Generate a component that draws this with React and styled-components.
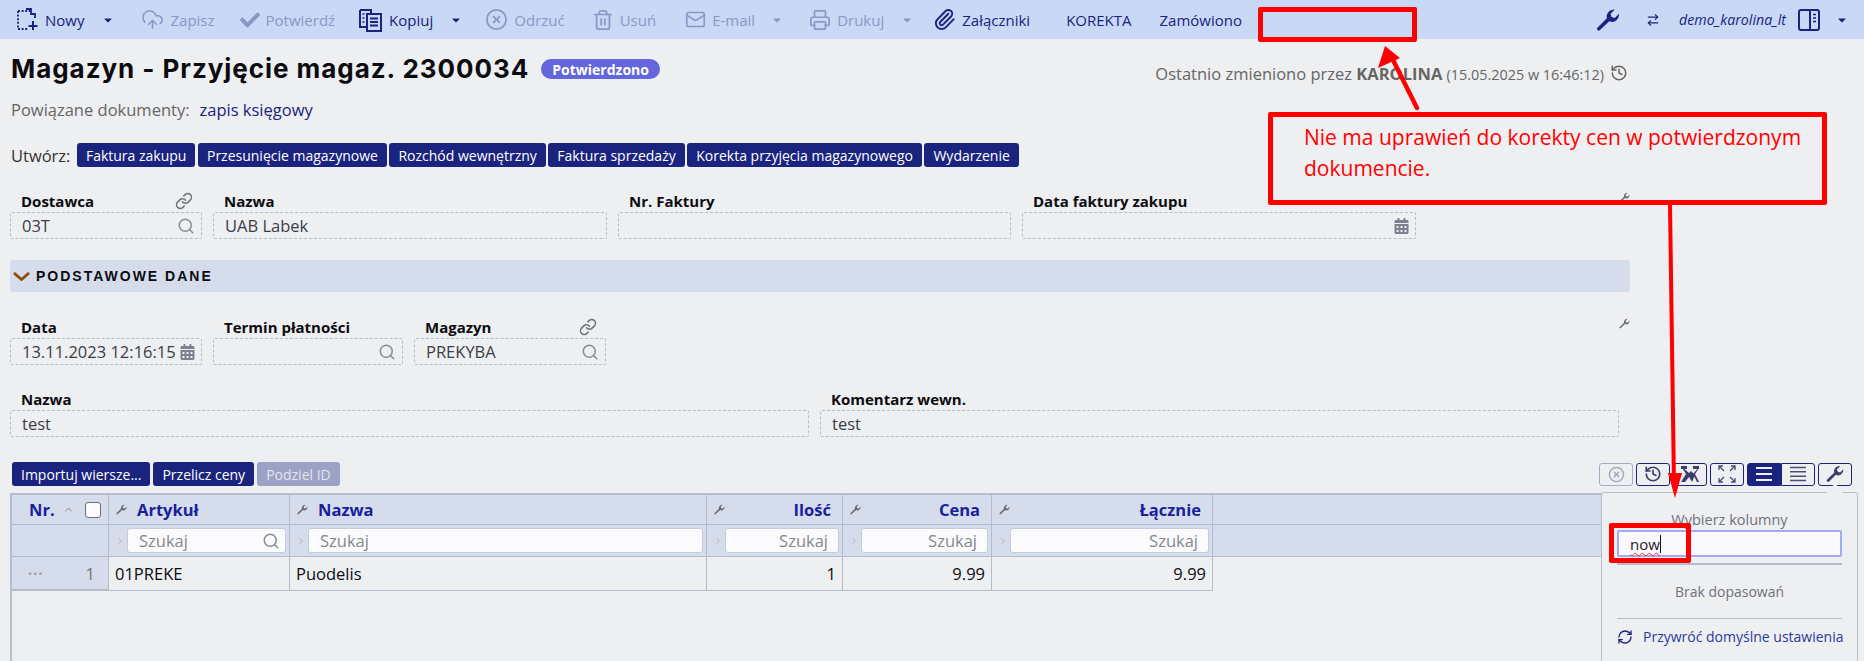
import React from "react";
import styled, { createGlobalStyle } from "styled-components";
import { CloudUpload, CircleX, Trash2, Mail, Printer, Paperclip, Search, Link as LinkIcon, History, RefreshCw, ChevronRight, ChevronUp, ArrowRightLeft } from "lucide-react";
import { FaCheck, FaCalendarAlt, FaCaretDown } from "react-icons/fa";

const NAVY = "#1a237e";
const MUTED = "#8c97c6";
const FONT = `"Open Sans", "Noto Sans", sans-serif`;

const Global = createGlobalStyle`
  html, body { margin: 0; padding: 0; background: #eeeff1; }
  * { box-sizing: border-box; }
  body { font-family: ${FONT}; }
`;

const Page = styled.div`
  position: relative;
  width: 1864px;
  height: 661px;
  overflow: hidden;
  background: #eeeff1;
  color: #333;
`;

const Toolbar = styled.div`
  display: flex;
  align-items: center;
  height: 39px;
  background: #c9d8f5;
  font-size: 15px;
`;

const ToolItem = styled.div`
  display: flex;
  align-items: center;
  gap: ${(p) => p.$gap ?? 6}px;
  margin-left: ${(p) => p.$ml ?? 0}px;
  color: ${(p) => (p.$off ? MUTED : NAVY)};
  white-space: nowrap;
`;

const Caret = styled(FaCaretDown)`
  font-size: 12px;
  margin-left: ${(p) => p.$ml ?? 0}px;
  margin-right: ${(p) => p.$mr ?? 0}px;
  color: ${(p) => (p.$off ? MUTED : NAVY)};
`;

const ToolSpacer = styled.div`
  flex: 1;
`;

const SwapGlyph = styled(ArrowRightLeft)`
  width: 14px;
  height: 14px;
  margin-left: 26px;
  color: ${NAVY};
`;

const UserName = styled.span`
  font-style: italic;
  font-size: 14.2px;
  color: ${NAVY};
  margin-left: 19px;
`;

const Content = styled.div`
  padding-left: 10px;
`;

const TitleRow = styled.div`
  display: flex;
  align-items: center;
  justify-content: space-between;
  width: 1620px;
  height: 24px;
  margin-top: 18px;
`;

const TitleGroup = styled.div`
  display: flex;
  align-items: center;
  gap: 12px;
`;

const Title = styled.h1`
  margin: 0 0 0 1px;
  font-family: Inter, sans-serif;
  font-size: 26px;
  font-weight: 700;
  letter-spacing: 0.95px;
  line-height: 24px;
  color: #0c0c10;
  white-space: nowrap;
`;

const Badge = styled.span`
  display: inline-flex;
  align-items: center;
  height: 20px;
  padding: 0 11px;
  border-radius: 10px;
  background: #6366dc;
  color: #fff;
  font-size: 14px;
  font-weight: 700;
`;

const Changed = styled.div`
  display: flex;
  align-items: center;
  gap: 6px;
  margin-right: 2px;
  margin-top: 8px;
  color: #666;
  font-size: 16.5px;
  white-space: nowrap;
  b { font-weight: 700; }
  small { font-size: 14.4px; }
`;

const Related = styled.div`
  margin: 18px 0 0 1px;
  height: 22px;
  line-height: 22px;
  font-size: 16.5px;
  color: #666;
  a { color: ${NAVY}; margin-left: 10px; text-decoration: none; }
`;

const CreateRow = styled.div`
  display: flex;
  align-items: center;
  gap: 2.5px;
  margin: 22px 0 0 1px;
  height: 24px;
`;

const CreateLabel = styled.span`
  font-size: 16.5px;
  color: #333;
  margin-right: 4px;
`;

const Btn = styled.button`
  height: 24px;
  padding: 0 9px;
  border: 0;
  border-radius: 3px;
  background: ${(p) => (p.disabled ? "#9ca1c6" : NAVY)};
  color: ${(p) => (p.disabled ? "#e3e5ef" : "#fff")};
  font-family: ${FONT};
  font-size: 14px;
  white-space: nowrap;
`;

const FieldRow = styled.div`
  display: flex;
  gap: 11px;
  width: 1620px;
  margin-top: ${(p) => p.$mt}px;
`;

const Field = styled.div`
  width: ${(p) => p.$w}px;
  flex: none;
`;

const LabelLine = styled.div`
  display: flex;
  align-items: center;
  justify-content: space-between;
  height: 22px;
  padding: 0 9px 0 11px;
  font-size: 15px;
  font-weight: 700;
  color: #0c0c10;
  white-space: nowrap;
`;

const LinkGlyph = styled(LinkIcon)`
  width: 18px;
  height: 18px;
  color: #70727f;
`;

const Input = styled.div`
  display: flex;
  align-items: center;
  justify-content: space-between;
  height: 27px;
  padding: 0 6px 0 11px;
  border: 1px dashed #b6bccd;
  border-radius: 2px;
  font-size: 16.5px;
  color: #3b3d48;
  white-space: nowrap;
`;

const SearchGlyph = styled(Search)`
  width: 18px;
  height: 18px;
  color: #8a8c96;
  flex: none;
`;

const CalGlyph = styled(FaCalendarAlt)`
  width: 15px;
  height: 16px;
  color: #7f8190;
  flex: none;
`;

const WrenchIcon = ({ className, size = 24, color = "currentColor" }) => (
  <svg className={className} width={size} height={size} viewBox="0 0 25 24" fill={color}>
    <path d="M1 20.5 L11.3 10.2 C10.3 5.5 13.8 1 19 1 L19.6 1.1 L15.2 5.5 L16.2 8.9 L19.6 9.9 L23.9 5.5 C24.4 11.5 19 16 13.8 13.2 L3.6 23 C2.6 23.8 0.4 21.6 1 20.5 Z" />
  </svg>
);

const RowWrench = styled(WrenchIcon)`
  margin: 2px 0 0 auto;
  color: #70727f;
  flex: none;
`;

const SectionBar = styled.div`
  display: flex;
  align-items: center;
  gap: 6px;
  width: 1620px;
  height: 32px;
  margin-top: 21px;
  padding-left: 3px;
  border-radius: 2px;
  background: #d5dcec;
  font-family: "Liberation Sans", Arial, sans-serif;
  font-size: 14px;
  font-weight: 700;
  letter-spacing: 2px;
  color: #0c0c10;
`;

const SectionChevron = () => (
  <svg width="17" height="9" viewBox="0 0 17 9" fill="none" stroke="#8a4b08" strokeWidth="2.8">
    <path d="M1 1l7.5 6.5L16 1" />
  </svg>
);

const TableBar = styled.div`
  display: flex;
  align-items: center;
  justify-content: space-between;
  width: 1842px;
  height: 24px;
  margin-top: 25px;
  padding-left: 2px;
`;

const BtnGroup = styled.div`
  display: flex;
  gap: 3px;
`;

const ViewGroup = styled.div`
  display: flex;
  gap: 3px;
`;

const ViewBtn = styled.div`
  display: flex;
  align-items: center;
  justify-content: center;
  width: ${(p) => p.$w ?? 34}px;
  height: 23px;
  border: 1px solid ${(p) => (p.$off ? "#a6abc8" : NAVY)};
  border-radius: ${(p) => p.$radius ?? "3px"};
  background: ${(p) => (p.$on ? NAVY : "transparent")};
  color: ${(p) => (p.$on ? "#eef" : p.$off ? "#a6a9b8" : "#3a3f6e")};
`;

const Segment = styled.div`
  display: flex;
`;

const Table = styled.div`
  width: 1620px;
  height: 200px;
  margin-top: 7px;
  border-left: 2px solid #b5bccc;
  border-top: 2px solid #b5bccc;
`;

const COLS = "97px 181px 417px 136px 149px 221px";

const HeadRow = styled.div`
  display: grid;
  grid-template-columns: ${COLS} 1fr;
  height: ${(p) => p.$h}px;
  background: #d5dcec;
  border-bottom: 1px solid #b5bccc;
`;

const HeadCell = styled.div`
  display: flex;
  align-items: center;
  justify-content: ${(p) => (p.$right ? "space-between" : "flex-start")};
  gap: 10px;
  padding: 0 11px 0 7px;
  border-right: 1px solid #b5bccc;
  color: #1a1f9c;
  font-size: 16.5px;
  font-weight: 700;
`;

const NrCell = styled(HeadCell)`
  padding: 0 0 0 17px;
  gap: 0;
`;

const SortCaret = styled(ChevronUp)`
  width: 11px;
  height: 11px;
  margin-left: 8px;
  color: #777;
`;

const Check = styled.span`
  width: 16px;
  height: 16px;
  margin-left: 11px;
  border: 1.5px solid #6d6d75;
  border-radius: 3px;
  background: #fbfbfe;
`;

const HeadWrench = styled(WrenchIcon)`
  color: #666a78;
  flex: none;
`;

const FilterCell = styled.div`
  display: flex;
  align-items: center;
  gap: 2px;
  padding: 0 3px 0 6px;
  border-right: 1px solid #b5bccc;
`;

const FilterChevron = styled(ChevronRight)`
  width: 10px;
  height: 16px;
  color: #a8acb8;
  flex: none;
`;

const FilterBox = styled.div`
  flex: 1;
  display: flex;
  align-items: center;
  justify-content: ${(p) => (p.$right ? "flex-end" : "space-between")};
  height: 25px;
  padding: 0 ${(p) => (p.$right ? 10 : 5)}px 0 11px;
  border: 1px solid #c8ccd6;
  border-radius: 3px;
  background: #fbfbfe;
  color: #85878f;
  font-size: 16.5px;
`;

const DataRow = styled.div`
  display: grid;
  grid-template-columns: ${COLS};
  height: 32px;
  width: 1201px;
`;

const DataCell = styled.div`
  display: flex;
  align-items: center;
  justify-content: ${(p) => (p.$right ? "flex-end" : "flex-start")};
  padding: 0 6px;
  border-right: 1px solid #b5bccc;
  border-bottom: 1px solid #b5bccc;
  color: #0c0c10;
  font-size: 16.5px;
`;

const RowHead = styled(DataCell)`
  justify-content: space-between;
  height: 34px;
  padding: 0 13px 0 16px;
  background: #d5dcec;
  color: #777;
  border-bottom: 2px solid #b5bccc;
`;

const Dots = styled.span`
  color: #9a9ca6;
  font-size: 11px;
  letter-spacing: 1px;
`;

const Popup = styled.div`
  position: absolute;
  left: 1601px;
  top: 492px;
  width: 257px;
  height: 180px;
  padding: 0 15px;
  border: 1px solid #b5bccc;
  border-radius: 3px;
  background: #eeeff1;
  font-size: 14.5px;
  color: #70727a;
  text-align: center;
  &::before {
    content: "";
    position: absolute;
    right: 16px;
    top: -7px;
    width: 12px;
    height: 12px;
    background: #eeeff1;
    transform: rotate(45deg);
  }
`;

const PopupTitle = styled.div`
  margin-top: 17px;
  height: 20px;
  line-height: 20px;
`;

const PopupInput = styled.div`
  display: flex;
  align-items: center;
  height: 27px;
  padding-left: 11px;
  border: 2px solid #a3abf0;
  border-radius: 2px;
  background: #f9f9fe;
  color: #222;
  font-size: 15px;
  span { text-decoration: underline wavy #e33 1px; text-underline-offset: 2px; }
  &::after { content: ""; width: 1px; height: 18px; background: #111; }
`;

const PopupLine = styled.div`
  height: 2px;
  margin-top: 6px;
  background: #b5bccc;
`;

const PopupEmpty = styled.div`
  margin-top: 17px;
  height: 20px;
  line-height: 20px;
  font-size: 14px;
`;

const PopupRule = styled.div`
  height: 1px;
  margin-top: 16px;
  background: #b5bccc;
`;

const PopupAction = styled.div`
  display: flex;
  align-items: center;
  gap: 10px;
  margin-top: 8px;
  color: #2a3a9e;
  font-size: 14px;
  white-space: nowrap;
`;

const ResetGlyph = styled(RefreshCw)`
  width: 16px;
  height: 16px;
  color: ${NAVY};
  flex: none;
`;

const NoteBox = styled.div`
  position: absolute;
  left: 1268px;
  top: 112px;
  width: 559px;
  height: 93px;
  padding: 5px 0 0 31px;
  border: 5px solid #f00;
  border-radius: 2px;
  color: #f00;
  font-size: 21px;
  line-height: 31px;
`;

const MarkBox = styled.div`
  position: absolute;
  left: ${(p) => p.$x}px;
  top: ${(p) => p.$y}px;
  width: ${(p) => p.$w}px;
  height: ${(p) => p.$h}px;
  border: ${(p) => p.$b ?? 5}px solid #f00;
  border-radius: 2px;
`;

const Arrows = styled.svg`
  position: absolute;
  left: 0;
  top: 0;
  pointer-events: none;
`;

const NewIcon = () => (
  <svg width="22" height="24" viewBox="0 0 22 24" fill="none" stroke={NAVY} strokeWidth="1.8">
    <path d="M1 3h9l4 0" strokeDasharray="2 1.6" />
    <path d="M9 1h5v5h4v4" />
    <path d="M1 3v18h10" strokeDasharray="2 1.6" />
    <path d="M16 13v9M11.5 18h9" strokeWidth="2" />
  </svg>
);

const CopyIcon = () => (
  <svg width="24" height="24" viewBox="0 0 24 24" fill="none" stroke={NAVY} strokeWidth="2">
    <path d="M1 2h11v3M7 19H1V2" />
    <path d="M3.5 6h2M3.5 10h2M3.5 14h2" strokeWidth="1.5" />
    <rect x="8" y="6" width="14" height="17" />
    <path d="M11 10.5h8M11 14h8M11 17.5h8" strokeWidth="1.8" />
  </svg>
);

const PanelIcon = () => (
  <svg width="22" height="22" viewBox="0 0 22 22" fill="none" stroke={NAVY} strokeWidth="2">
    <rect x="1" y="1" width="20" height="20" rx="2" />
    <path d="M12 1v20" />
    <path d="M15 5.5h3M15 9h3M15 12.5h3" strokeWidth="1.6" />
  </svg>
);

const ColsIcon = () => (
  <svg width="24" height="18" viewBox="0 0 24 18" fill="#3a3f6e">
    <path d="M3 1h6v3H3zM15 1h6v3h-6z" />
    <path d="M3 1l8 7 2-2 4 4-3 7-3-5-4 5H3l5-8z" />
    <path d="M21 2l-6 7 4 8h2l-4-8 4-6z" />
  </svg>
);

const ExpandIcon = () => (
  <svg width="18" height="18" viewBox="0 0 18 18" fill="none" stroke="#4a4e78" strokeWidth="1.3">
    <path d="M1 5V1h4M1 1l5 5M13 1h4v4M17 1l-5 5M1 13v4h4M1 17l5-5M17 13v4h-4M17 17l-5-5" />
  </svg>
);

const LinesIcon = ({ n, color }) => (
  <svg width="18" height="16" viewBox="0 0 18 16" stroke={color} strokeWidth={n === 3 ? 2 : 1.5}>
    {n === 3 ? (
      <path d="M1 2h16M1 8h16M1 14h16" />
    ) : (
      <path d="M1 1.5h16M1 5.8h16M1 10.2h16M1 14.5h16" />
    )}
  </svg>
);

const columns = [
  { name: "Artykuł", filter: true, glass: true },
  { name: "Nazwa", filter: true },
  { name: "Ilość", right: true },
  { name: "Cena", right: true },
  { name: "Łącznie", right: true },
];

export default function App() {
  return (
    <Page>
      <Global />
      <Toolbar>
        <ToolItem $ml={17}><NewIcon />Nowy</ToolItem>
        <Caret $ml={18} />
        <ToolItem $off $ml={27}><CloudUpload size={23} strokeWidth={1.6} />Zapisz</ToolItem>
        <ToolItem $off $ml={25}><FaCheck size={20} />Potwierdź</ToolItem>
        <ToolItem $ml={24}><CopyIcon />Kopiuj</ToolItem>
        <Caret $ml={17} />
        <ToolItem $off $ml={23}><CircleX size={23} strokeWidth={1.9} />Odrzuć</ToolItem>
        <ToolItem $off $ml={27}><Trash2 size={22} strokeWidth={1.9} />Usuń</ToolItem>
        <ToolItem $off $ml={29}><Mail size={21} strokeWidth={1.9} />E-mail</ToolItem>
        <Caret $off $ml={16} />
        <ToolItem $off $ml={26}><Printer size={22} strokeWidth={1.9} />Drukuj</ToolItem>
        <Caret $off $ml={17} />
        <ToolItem $ml={20}><Paperclip size={23} strokeWidth={2} />Załączniki</ToolItem>
        <ToolItem $ml={36}>KOREKTA</ToolItem>
        <ToolItem $ml={28}>Zamówiono</ToolItem>
        <ToolSpacer />
        <WrenchIcon size={24} color={NAVY} />
        <SwapGlyph />
        <UserName>demo_karolina_lt</UserName>
        <ToolItem $ml={12}><PanelIcon /></ToolItem>
        <Caret $ml={16} $mr={16} />
      </Toolbar>

      <Content>
        <TitleRow>
          <TitleGroup>
            <Title>Magazyn - Przyjęcie magaz. 2300034</Title>
            <Badge>Potwierdzono</Badge>
          </TitleGroup>
          <Changed>
            <span>Ostatnio zmieniono przez <b>KAROLINA</b> <small>(15.05.2025 w 16:46:12)</small></span>
            <History size={18} color="#666" />
          </Changed>
        </TitleRow>

        <Related>Powiązane dokumenty:<a>zapis księgowy</a></Related>

        <CreateRow>
          <CreateLabel>Utwórz:</CreateLabel>
          <Btn>Faktura zakupu</Btn>
          <Btn>Przesunięcie magazynowe</Btn>
          <Btn>Rozchód wewnętrzny</Btn>
          <Btn>Faktura sprzedaży</Btn>
          <Btn>Korekta przyjęcia magazynowego</Btn>
          <Btn>Wydarzenie</Btn>
        </CreateRow>

        <FieldRow $mt={23}>
          <Field $w={192}>
            <LabelLine>Dostawca<LinkGlyph /></LabelLine>
            <Input>03T<SearchGlyph /></Input>
          </Field>
          <Field $w={394}>
            <LabelLine>Nazwa</LabelLine>
            <Input>UAB Labek</Input>
          </Field>
          <Field $w={393}>
            <LabelLine>Nr. Faktury</LabelLine>
            <Input />
          </Field>
          <Field $w={394}>
            <LabelLine>Data faktury zakupu</LabelLine>
            <Input><span /><CalGlyph /></Input>
          </Field>
          <RowWrench size={11} />
        </FieldRow>

        <SectionBar><SectionChevron />PODSTAWOWE DANE</SectionBar>

        <FieldRow $mt={24}>
          <Field $w={192}>
            <LabelLine>Data</LabelLine>
            <Input>13.11.2023 12:16:15<CalGlyph /></Input>
          </Field>
          <Field $w={190}>
            <LabelLine>Termin płatności</LabelLine>
            <Input><span /><SearchGlyph /></Input>
          </Field>
          <Field $w={192}>
            <LabelLine>Magazyn<LinkGlyph /></LabelLine>
            <Input>PREKYBA<SearchGlyph /></Input>
          </Field>
          <RowWrench size={11} />
        </FieldRow>

        <FieldRow $mt={23}>
          <Field $w={799}>
            <LabelLine>Nazwa</LabelLine>
            <Input>test</Input>
          </Field>
          <Field $w={799}>
            <LabelLine>Komentarz wewn.</LabelLine>
            <Input>test</Input>
          </Field>
        </FieldRow>

        <TableBar>
          <BtnGroup>
            <Btn>Importuj wiersze...</Btn>
            <Btn>Przelicz ceny</Btn>
            <Btn disabled>Podziel ID</Btn>
          </BtnGroup>
          <ViewGroup>
            <ViewBtn $off><CircleX size={17} strokeWidth={2} /></ViewBtn>
            <ViewBtn><History size={18} strokeWidth={2.2} /></ViewBtn>
            <ViewBtn><ColsIcon /></ViewBtn>
            <ViewBtn><ExpandIcon /></ViewBtn>
            <Segment>
              <ViewBtn $on $radius="3px 0 0 3px"><LinesIcon n={3} color="#eef" /></ViewBtn>
              <ViewBtn $radius="0 3px 3px 0"><LinesIcon n={4} color="#4a4e78" /></ViewBtn>
            </Segment>
            <ViewBtn><WrenchIcon size={18} /></ViewBtn>
          </ViewGroup>
        </TableBar>

        <Table>
          <HeadRow $h={30}>
            <NrCell>Nr.<SortCaret /><Check /></NrCell>
            {columns.map((c) => (
              <HeadCell key={c.name} $right={c.right}>
                <HeadWrench size={11} />{c.name}
              </HeadCell>
            ))}
          </HeadRow>
          <HeadRow $h={32}>
            <FilterCell />
            {columns.map((c) => (
              <FilterCell key={c.name}>
                <FilterChevron />
                <FilterBox $right={c.right}>
                  Szukaj{c.glass && <SearchGlyph />}
                </FilterBox>
              </FilterCell>
            ))}
          </HeadRow>
          <DataRow>
            <RowHead><Dots>•••</Dots>1</RowHead>
            <DataCell>01PREKE</DataCell>
            <DataCell>Puodelis</DataCell>
            <DataCell $right>1</DataCell>
            <DataCell $right>9.99</DataCell>
            <DataCell $right>9.99</DataCell>
          </DataRow>
        </Table>
      </Content>

      <Popup>
        <PopupTitle>Wybierz kolumny</PopupTitle>
        <PopupInput><span>now</span></PopupInput>
        <PopupLine />
        <PopupEmpty>Brak dopasowań</PopupEmpty>
        <PopupRule />
        <PopupAction><ResetGlyph />Przywróć domyślne ustawienia</PopupAction>
      </Popup>

      <MarkBox $x={1258} $y={7} $w={159} $h={35} />
      <NoteBox>Nie ma uprawień do korekty cen w potwierdzonym dokumencie.</NoteBox>
      <MarkBox $x={1609} $y={523} $w={82} $h={40} />
      <Arrows width="1864" height="661" viewBox="0 0 1864 661">
        <path d="M1417 108 L1392 58" stroke="#f00" strokeWidth="4.5" strokeLinecap="round" />
        <path d="M1385 46 L1378 68 L1400 58 Z" fill="#f00" />
        <path d="M1670 205 L1674 485" stroke="#f00" strokeWidth="4" />
        <path d="M1675 498 L1668 473 L1682 473 Z" fill="#f00" />
      </Arrows>
    </Page>
  );
}
